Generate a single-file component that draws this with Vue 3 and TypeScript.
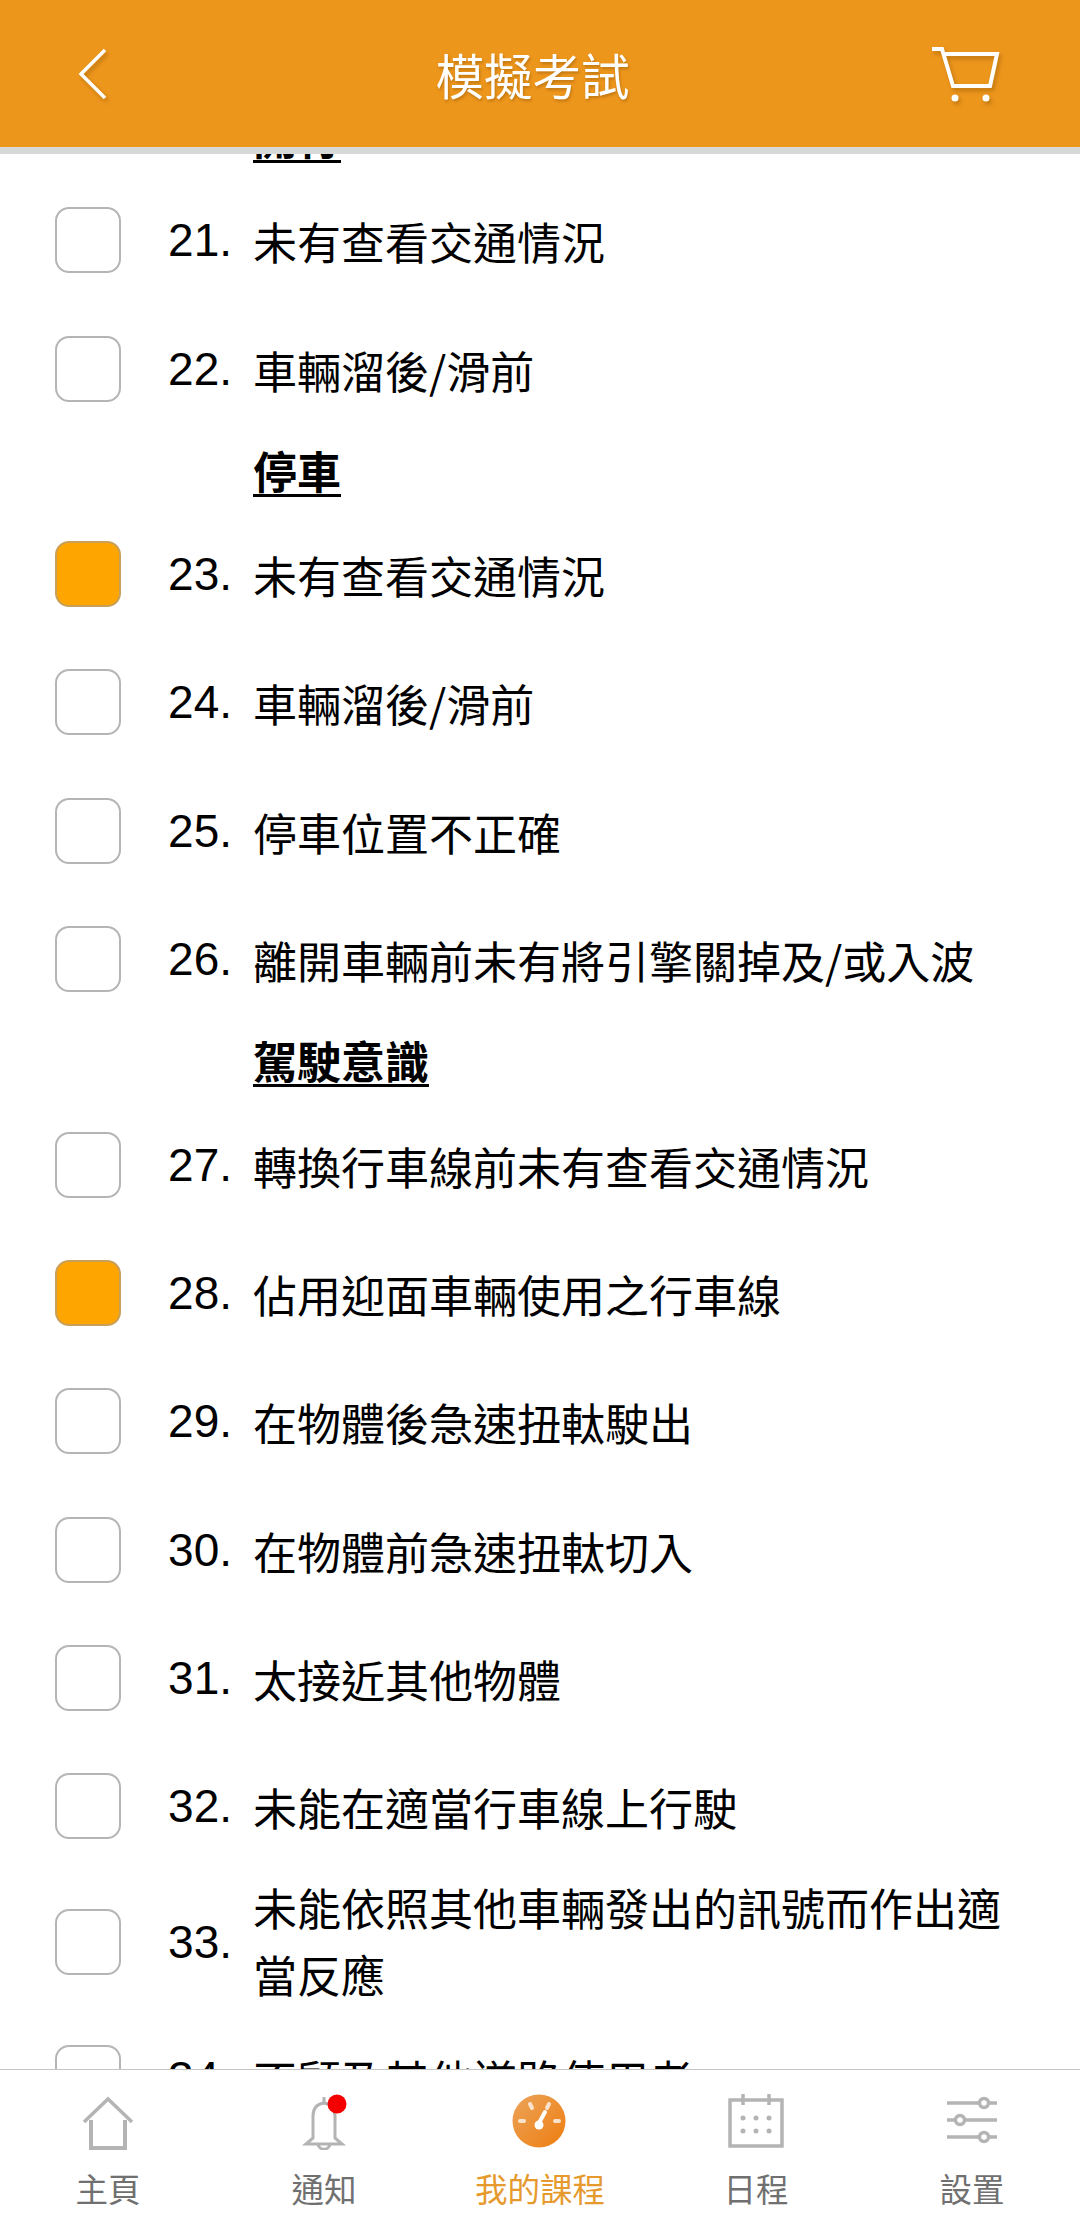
<template>
  <div class="page">
    <header class="topbar">
      <svg class="back" viewBox="0 0 40 60" width="40" height="60">
        <path d="M33 6 L9 30 L33 54" fill="none" stroke="#fff" stroke-width="3.5" />
      </svg>
      <h1>模擬考試</h1>
      <svg class="cart" viewBox="0 0 70 62" width="70" height="62">
        <path d="M0 6 H10 L21 43 H58 L65 11 H12" fill="none" stroke="#fff" stroke-width="4" />
        <circle cx="23" cy="55" r="3.5" fill="#fff" />
        <circle cx="54" cy="55" r="3.5" fill="#fff" />
      </svg>
    </header>
    <div class="strip"></div>

    <main class="scroller">
      <div class="list">
        <template v-for="item in items" :key="item.key">
          <div v-if="item.heading" class="heading"><span>{{ item.heading }}</span></div>
          <div v-else class="row" :class="{ tall: item.tall }">
            <span class="box" :class="{ on: item.on }"></span>
            <span class="num">{{ item.no }}.</span>
            <span class="txt">{{ item.text }}</span>
          </div>
        </template>
      </div>
    </main>

    <nav class="tabs">
      <div class="tab">
        <svg viewBox="0 0 56 56" width="56" height="56">
          <path d="M4 28 L28 5 L52 28" fill="none" stroke="#b4b4b4" stroke-width="3.5" />
          <path d="M11 26 V54 H45 V26" fill="none" stroke="#b4b4b4" stroke-width="4" />
        </svg>
        <span>主頁</span>
      </div>
      <div class="tab">
        <svg viewBox="0 0 56 56" width="56" height="56">
          <path d="M28 3 V9 M17 44 V22 C17 14 21 10 28 9 C35 10 39 14 39 22 V44 L46 50 H10 L17 44 Z" fill="none" stroke="#b4b4b4" stroke-width="3" />
          <path d="M22 50 C23 57 33 57 34 50" fill="none" stroke="#b4b4b4" stroke-width="3" />
          <circle cx="41" cy="10" r="9.5" fill="#f40000" />
        </svg>
        <span>通知</span>
      </div>
      <div class="tab active">
        <svg viewBox="0 0 56 56" width="56" height="56">
          <defs>
            <linearGradient id="dial" x1="0" y1="0" x2="1" y2="1">
              <stop offset="0" stop-color="#eca45a" />
              <stop offset="1" stop-color="#ee7d10" />
            </linearGradient>
          </defs>
          <circle cx="27" cy="27" r="26.5" fill="url(#dial)" />
          <path d="M33 18 L27 29" stroke="#fff" stroke-width="4" stroke-linecap="round" />
          <circle cx="27" cy="31" r="4.5" fill="#fff" />
          <g stroke="#f9e3cc" stroke-width="4" stroke-linecap="round">
            <path d="M18 10 L20 14" />
            <path d="M37 10 L35 14" />
            <path d="M8 27 H12" />
            <path d="M43 27 H47" />
          </g>
        </svg>
        <span>我的課程</span>
      </div>
      <div class="tab">
        <svg viewBox="0 0 56 56" width="56" height="56">
          <path d="M2 6 H54 V52 H2 Z" fill="none" stroke="#b4b4b4" stroke-width="3.5" />
          <path d="M15 0 V11 M41 0 V11" stroke="#b4b4b4" stroke-width="3.5" />
          <g fill="#b4b4b4">
            <circle cx="15" cy="24" r="2.5" /><circle cx="28" cy="24" r="2.5" /><circle cx="41" cy="24" r="2.5" />
            <circle cx="15" cy="37" r="2.5" /><circle cx="28" cy="37" r="2.5" /><circle cx="41" cy="37" r="2.5" />
          </g>
        </svg>
        <span>日程</span>
      </div>
      <div class="tab">
        <svg viewBox="0 0 56 56" width="56" height="56">
          <g stroke="#b4b4b4" stroke-width="3.5" fill="#fff">
            <path d="M3 9 H53 M3 26 H53 M3 43 H53" />
            <circle cx="40" cy="9" r="4.5" />
            <circle cx="16" cy="26" r="4.5" />
            <circle cx="40" cy="43" r="4.5" />
          </g>
        </svg>
        <span>設置</span>
      </div>
    </nav>
  </div>
</template>

<script setup lang="ts">
interface Item {
  key: string
  heading?: string
  no?: number
  text?: string
  on?: boolean
  tall?: boolean
}

const q = (no: number, text: string, on = false, tall = false): Item => ({ key: 'q' + no, no, text, on, tall })
const h = (heading: string): Item => ({ key: 'h' + heading, heading })

const items: Item[] = [
  h('開行'),
  q(21, '未有查看交通情況'),
  q(22, '車輛溜後/滑前'),
  h('停車'),
  q(23, '未有查看交通情況', true),
  q(24, '車輛溜後/滑前'),
  q(25, '停車位置不正確'),
  q(26, '離開車輛前未有將引擎關掉及/或入波'),
  h('駕駛意識'),
  q(27, '轉換行車線前未有查看交通情況'),
  q(28, '佔用迎面車輛使用之行車線', true),
  q(29, '在物體後急速扭軚駛出'),
  q(30, '在物體前急速扭軚切入'),
  q(31, '太接近其他物體'),
  q(32, '未能在適當行車線上行駛'),
  q(33, '未能依照其他車輛發出的訊號而作出適當反應', false, true),
  q(34, '不顧及其他道路使用者')
]
</script>

<style scoped>
.page {
  width: 1080px;
  height: 2226px;
  display: flex;
  flex-direction: column;
  overflow: hidden;
  background: #fff;
  font-family: "Liberation Sans", "Noto Sans CJK TC", sans-serif;
  color: #000;
}
.topbar {
  height: 147px;
  flex: none;
  background: #ed961c;
  display: flex;
  align-items: center;
  justify-content: space-between;
  padding: 0 78px 0 72px;
  box-sizing: border-box;
}
.topbar h1 {
  margin: 0 0 0 21px;
  font-size: 48.5px;
  font-weight: 400;
  color: #fff;
  text-shadow: 1px 2px 3px rgba(120, 70, 0, 0.4);
}
.back, .cart { filter: drop-shadow(2px 3px 2px rgba(120, 70, 0, 0.4)); }
.strip { height: 7px; flex: none; background: #d7d9d9; }
.scroller { flex: 1; min-height: 0; overflow: hidden; }
.list { margin-top: -55px; padding-right: 60px; }
.heading {
  height: 77px;
  line-height: 77px;
  padding-left: 253px;
  font-family: "Noto Sans CJK TC", sans-serif;
  font-size: 44px;
  font-weight: 700;
}
.heading span {
  position: relative;
  top: -1px;
  text-decoration: underline;
  text-decoration-thickness: 3px;
  text-underline-offset: 5px;
}
.row {
  height: 128.4px;
  display: flex;
  align-items: center;
  padding-left: 55px;
}
.row.tall { height: 143.6px; }
.box {
  width: 66px;
  height: 66px;
  flex: none;
  box-sizing: border-box;
  border: 2px solid #b5b5b5;
  border-radius: 14px;
  background: #fff;
}
.box.on { background: #ffa500; border-color: #c9a05a; }
.num {
  width: 111px;
  flex: none;
  text-align: right;
  font-size: 46px;
}
.txt {
  margin-left: 21px;
  font-family: "Noto Sans CJK TC", sans-serif;
  font-size: 44px;
  line-height: 66px;
  position: relative;
  top: 1px;
}
.row.tall .txt { top: -1px; line-height: 67px; }
.tabs {
  height: 157px;
  flex: none;
  border-top: 1px solid #c4c4c4;
  box-sizing: border-box;
  background: #fff;
  display: grid;
  grid-template-columns: repeat(5, 1fr);
  padding: 24px 0 0;
}
.tab {
  display: flex;
  flex-direction: column;
  align-items: center;
  gap: 24px;
  font-size: 32.5px;
  line-height: 34px;
  color: #707070;
}
.tab.active { color: #e69a2e; }
</style>
